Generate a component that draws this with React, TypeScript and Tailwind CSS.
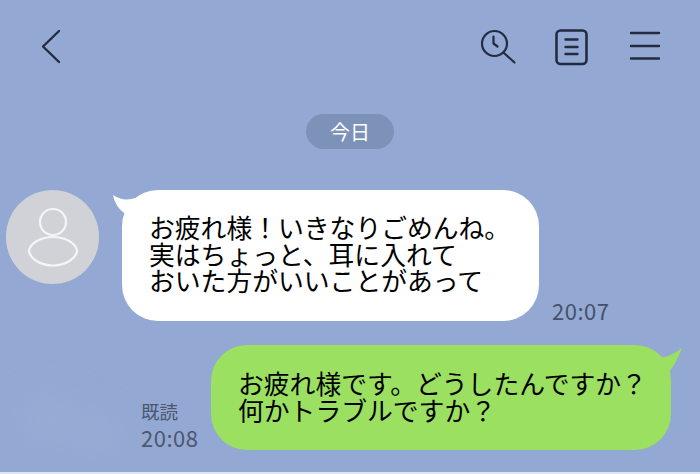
export default function App() {
  return (
    <div className="relative flex h-[474px] w-[700px] flex-col overflow-hidden bg-[#93a9d3] font-['Noto_Sans_CJK_JP','Noto_Sans',sans-serif] text-black">
      {/* faint cloud in the wallpaper */}
      <div className="absolute bottom-[30px] left-[25px] h-[50px] w-[50px] rounded-full bg-[#98add5] blur-lg" />
      <div className="absolute bottom-[20px] left-[75px] h-[40px] w-[40px] rounded-full bg-[#98add5] blur-lg" />

      {/* header */}
      <div className="relative flex h-[92px] shrink-0 items-start pl-[41px] pr-[39px] pt-[29px] text-[#232b40]">
        <svg width="20" height="36" viewBox="0 0 20 36" fill="none" stroke="currentColor" strokeWidth="2.4" strokeLinecap="round" strokeLinejoin="round">
          <path d="M18 2 L2 17.5 L18 33" />
        </svg>
        <div className="ml-auto flex items-start">
          <svg width="36" height="36" viewBox="0 0 36 36" fill="none" stroke="currentColor" strokeWidth="2.2" strokeLinecap="round" strokeLinejoin="round">
            <circle cx="14.5" cy="14.5" r="12.5" />
            <path d="M24 24 L34.5 33.5" />
            <path d="M13.5 7.5 V14.5 L17.5 17.5" />
          </svg>
          <svg className="ml-[39px]" width="34" height="37" viewBox="0 0 34 37" fill="none" stroke="currentColor" strokeLinecap="round">
            <rect x="1.5" y="1.5" width="30" height="33.5" rx="4" strokeWidth="2.6" />
            <path d="M10.5 10.5 H22.5 M10.5 18 H22.5 M10.5 25 H22.5" strokeWidth="2.4" />
          </svg>
          <svg className="ml-[40px]" width="32" height="32" viewBox="0 0 32 32" fill="none" stroke="currentColor" strokeWidth="2.4" strokeLinecap="round">
            <path d="M2 4 H30 M2 17 H30 M2 29.5 H30" />
          </svg>
        </div>
      </div>

      {/* date */}
      <div className="relative flex h-[98px] shrink-0 justify-center pt-[22px]">
        <div className="flex h-[35px] w-[88px] items-center justify-center rounded-full bg-[#7d92b8] text-[20px] leading-none text-white">
          今日
        </div>
      </div>

      {/* incoming message */}
      <div className="relative flex items-start pl-[6px]">
        <div className="flex h-[94px] w-[93px] shrink-0 items-center justify-center rounded-full bg-[#d1d2d7]">
          <svg width="52" height="60" viewBox="0 0 52 60" fill="none" stroke="#f4f5f7" strokeWidth="2.2">
            <circle cx="26" cy="15" r="13" />
            <path d="M2 44 C3 36 14 30 26 30 C38 30 49 36 50 44 C49 52 38 58.5 26 58.5 C14 58.5 3 52 2 44 Z" />
          </svg>
        </div>
        <div className="relative ml-[23px] h-[131px] w-[417px] rounded-[36px] bg-white pl-[27px] pt-[24px] text-[25.8px] leading-[26.5px] whitespace-nowrap">
          <svg className="absolute left-[-9px] top-[5px]" width="26" height="24" viewBox="0 0 26 24" fill="#ffffff">
            <path d="M0 0 C8 5 14 6 26 2 L14 20 C6 15 2 9 0 0 Z" />
          </svg>
          <p className="relative">お疲れ様！いきなりごめんね。</p>
          <p className="relative">実はちょっと、耳に入れて</p>
          <p className="relative">おいた方がいいことがあって</p>
        </div>
        <div className="ml-[13px] translate-y-[1px] self-end text-[22px] leading-[24px] tracking-[0.5px] text-[#46506a]">
          20:07
        </div>
      </div>

      {/* outgoing message */}
      <div className="relative mt-[24px] flex items-end pl-[141px]">
        <div className="w-[70px] shrink-0 pb-[1px] text-[#4d5670]">
          <div className="text-[18.5px] leading-[24px]">既読</div>
          <div className="mt-[2px] text-[22px] leading-[24px] tracking-[0.5px]">20:08</div>
        </div>
        <div className="relative h-[105px] w-[460px] rounded-[36px] bg-[#9be060] pl-[27px] pt-[25px] text-[25.8px] leading-[26.5px] whitespace-nowrap">
          <svg className="absolute right-[-11px] top-[3px]" width="30" height="34" viewBox="0 0 30 34" fill="#9be060">
            <path d="M30 0 C26 10 22 20 10 32 L0 10 C10 11 20 8 30 0 Z" />
          </svg>
          <p className="relative">お疲れ様です。どうしたんですか？</p>
          <p className="relative">何かトラブルですか？</p>
        </div>
      </div>

      <div className="absolute bottom-0 left-0 h-[2px] w-full bg-[#dfe5f0]" />
    </div>
  )
}
